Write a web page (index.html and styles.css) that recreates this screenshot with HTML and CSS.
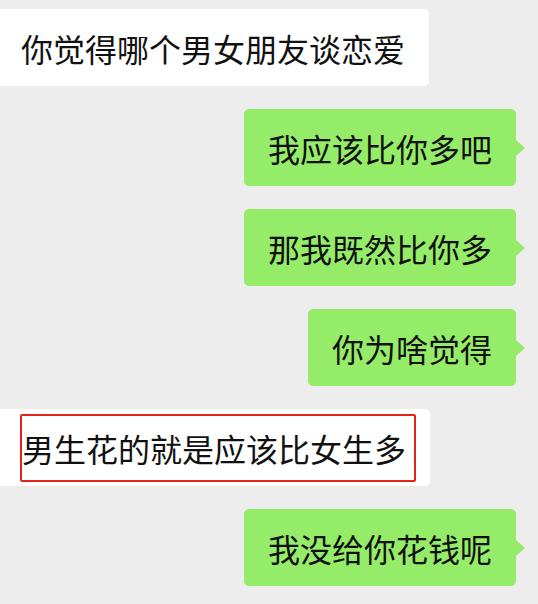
FILE: index.html
```html
<!DOCTYPE html>
<html lang="zh-CN">
<head>
    <meta charset="UTF-8">
    <meta name="viewport" content="width=device-width, initial-scale=1.0">
    <title>聊天记录</title>
    <link rel="stylesheet" href="styles.css">
</head>
<body>
    <main class="chat">
        <div class="row left">
            <div class="bubble white">你觉得哪个男女朋友谈恋爱</div>
        </div>
        <div class="row right">
            <div class="bubble green">我应该比你多吧</div>
        </div>
        <div class="row right">
            <div class="bubble green">那我既然比你多</div>
        </div>
        <div class="row right">
            <div class="bubble green">你为啥觉得</div>
        </div>
        <div class="row left">
            <div class="bubble white marked">
                <span class="highlight">男生花的就是应该比女生多</span>
            </div>
        </div>
        <div class="row right">
            <div class="bubble green">我没给你花钱呢</div>
        </div>
    </main>
</body>
</html>
```

FILE: styles.css
```css
body {
    margin: 0;
    padding: 0;
    background-color: #ededed;
    font-family: "Noto Sans CJK SC", "Noto Sans", sans-serif;
    color: #111;
}

/* Liste des messages */
.chat {
    display: flex;
    flex-direction: column;
    gap: 23px;
    padding-top: 9px;
}

.row {
    display: flex;
}

.row.left {
    justify-content: flex-start;
}

.row.right {
    justify-content: flex-end;
    padding-right: 22px;
}

/* Bulles */
.bubble {
    position: relative;
    display: flex;
    align-items: center;
    height: 77px;
    padding: 0 24px;
    font-size: 32px;
    line-height: 1;
    border-radius: 5px;
    white-space: nowrap;
}

.bubble.white {
    background-color: #ffffff;
    padding-left: 21px;
    border-radius: 0 5px 5px 0;
}

.bubble.green {
    background-color: #95ec69;
}

.bubble.green::after {
    content: "";
    position: absolute;
    right: -9px;
    top: 50%;
    margin-top: -8px;
    border-top: 8px solid transparent;
    border-bottom: 8px solid transparent;
    border-left: 9px solid #95ec69;
}

/* Cadre rouge */
.bubble.marked {
    padding-left: 20px;
    padding-right: 14px;
}

.highlight {
    display: flex;
    align-items: center;
    height: 68px;
    box-sizing: border-box;
    border: 2px solid #e02418;
    border-radius: 2px;
    padding: 0 8px 0 0;
    letter-spacing: 0;
}
```
